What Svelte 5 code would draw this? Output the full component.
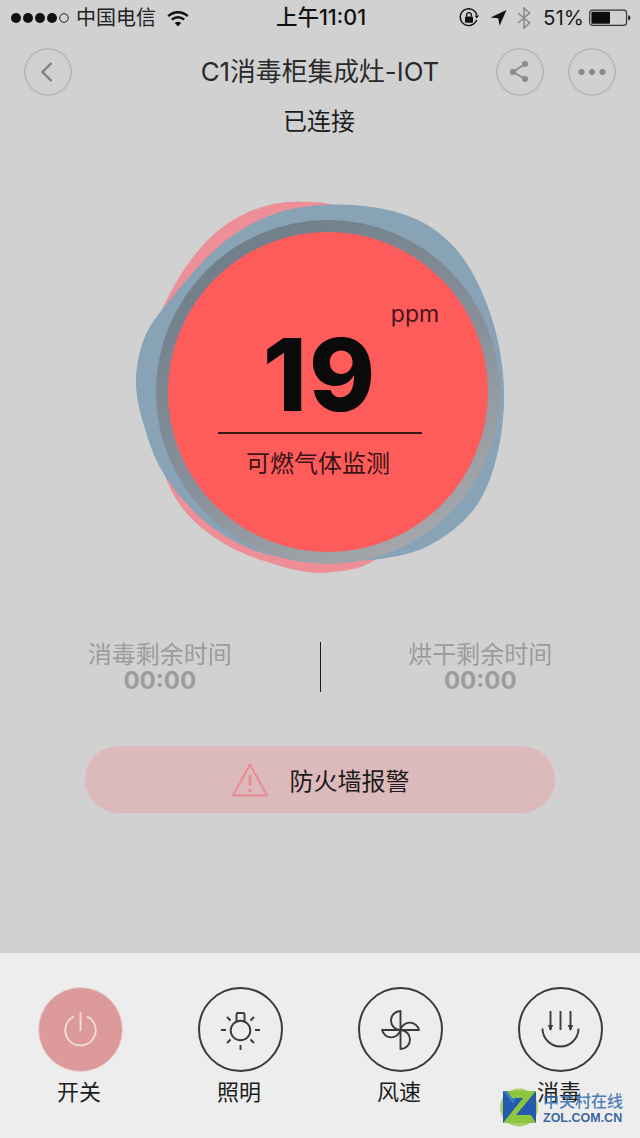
<script>
  function smooth(pts) {
    const n = pts.length;
    let d = `M${pts[0][0]} ${pts[0][1]}`;
    for (let i = 0; i < n; i++) {
      const p0 = pts[(i - 1 + n) % n], p1 = pts[i], p2 = pts[(i + 1) % n], p3 = pts[(i + 2) % n];
      const c1 = [p1[0] + (p2[0] - p0[0]) / 6, p1[1] + (p2[1] - p0[1]) / 6];
      const c2 = [p2[0] - (p3[0] - p1[0]) / 6, p2[1] - (p3[1] - p1[1]) / 6];
      d += `C${c1[0].toFixed(1)} ${c1[1].toFixed(1)} ${c2[0].toFixed(1)} ${c2[1].toFixed(1)} ${p2[0]} ${p2[1]}`;
    }
    return d + 'Z';
  }
  const zoomed = (a) => a.map(([x, y]) => [120 + x / 3, 190 + y / 3]);
  const pink = smooth(zoomed([
    [100,590],[110,410],[185,250],[285,130],[400,60],[530,35],[680,60],[850,200],[950,450],[950,800],[800,1080],[620,1148],[430,1112],[280,1040],[170,930],[115,780]
  ]));
  const blue = smooth(zoomed([
    [600,45],[780,55],[930,110],[1040,220],[1120,400],[1152,600],[1130,800],[1060,960],[920,1070],[750,1110],[560,1110],[400,1080],[250,990],[130,850],[70,700],[48,570],[75,440],[150,330],[290,175],[440,80]
  ]));
  const tabs = ['开关', '照明', '风速', '消毒'];
</script>

<div class="screen">
  <div class="status">
    <div class="st-left">
      <svg width="60" height="12" viewBox="0 0 60 12">
        <circle cx="5" cy="6" r="5" fill="#111"/><circle cx="17" cy="6" r="5" fill="#111"/><circle cx="29" cy="6" r="5" fill="#111"/><circle cx="41" cy="6" r="5" fill="#111"/><circle cx="53" cy="6" r="4.3" fill="none" stroke="#222" stroke-width="1"/>
      </svg>
      <span class="carrier">中国电信</span>
      <svg class="wifi" width="22" height="17" viewBox="0 0 22 17" fill="none" stroke="#111" stroke-width="2.4">
        <path d="M1.2 6.2C6.8 1 15.2 1 20.8 6.2"/><path d="M4.8 9.6C8.4 6.4 13.6 6.4 17.2 9.6"/><path d="M11 16.5L7.8 12.9C9.8 11.4 12.2 11.4 14.2 12.9Z" fill="#111" stroke="none"/>
      </svg>
    </div>
    <div class="time">上午11:01</div>
    <div class="st-right">
      <svg width="20" height="20" viewBox="0 0 20 20" fill="none">
        <path d="M17.6 12A8.4 8.4 0 1 1 17.8 7" stroke="#111" stroke-width="1.4"/><path d="M15.6 7.5h4.4L17.8 10.4Z" fill="#111"/>
        <rect x="6" y="8.6" width="8" height="6.2" rx="1" fill="#111"/><path d="M7.6 8.6V7a2.4 2.4 0 0 1 4.8 0v1.6" stroke="#111" stroke-width="1.3"/>
      </svg>
      <svg class="loc" width="17" height="16" viewBox="0 0 17 16"><path d="M16.5 0L0.5 7.4L8.2 8.2L9.6 15.8Z" fill="#111"/></svg>
      <svg class="bt" width="14" height="22" viewBox="0 0 14 22" fill="none" stroke="#8c8c8c" stroke-width="1.6"><path d="M1 6L12.5 15.8L7 21V1L12.5 6.2L1 16"/></svg>
      <span class="pct">51%</span>
      <svg width="42" height="18" viewBox="0 0 44 18">
        <rect x="0.7" y="0.7" width="38.6" height="16" rx="3" fill="none" stroke="#333" stroke-width="1.2"/>
        <rect x="2.5" y="2.5" width="19.5" height="12.5" rx="1" fill="#0c0c0c"/>
        <path d="M41 6c1.6.3 2.4 1.4 2.4 2.7S42.600 11.100 41 11.400Z" fill="#222"/>
      </svg>
    </div>
  </div>

  <header class="nav">
    <button class="round" aria-label="返回">
      <svg width="48" height="48" viewBox="0 0 48 48" fill="none"><circle cx="24" cy="24" r="23.200" stroke="#b6b6b6" stroke-width="1.500"/><path d="M27.500 15L18.500 24L27.500 33" stroke="#808080" stroke-width="2.400"/></svg>
    </button>
    <h1>C1消毒柜集成灶-IOT</h1>
    <div class="nav-right">
      <button class="round" aria-label="分享">
        <svg width="48" height="48" viewBox="0 0 48 48" fill="none"><circle cx="24" cy="24" r="23.200" stroke="#b6b6b6" stroke-width="1.500"/><path d="M29 16L17 24L29 31" stroke="#8a8a8a" stroke-width="1.800"/><circle cx="29" cy="16" r="3" fill="#8a8a8a"/><circle cx="17" cy="24" r="3" fill="#8a8a8a"/><circle cx="29" cy="31" r="3" fill="#8a8a8a"/></svg>
      </button>
      <button class="round" aria-label="更多">
        <svg width="48" height="48" viewBox="0 0 48 48" fill="none"><circle cx="24" cy="24" r="23.200" stroke="#b6b6b6" stroke-width="1.500"/><circle cx="13.500" cy="24" r="3" fill="#8a8a8a"/><circle cx="24" cy="24" r="3" fill="#8a8a8a"/><circle cx="34.500" cy="24" r="3" fill="#8a8a8a"/></svg>
      </button>
    </div>
  </header>

  <div class="conn">已连接</div>

  <section class="gauge">
    <svg class="blobs" width="640" height="420" viewBox="0 180 640 420">
      <defs>
        <linearGradient id="ring" x1="0.25" y1="0" x2="0.8" y2="0.95">
          <stop offset="0" stop-color="#6f7d88"/>
          <stop offset="0.55" stop-color="#87909a"/>
          <stop offset="1" stop-color="#a6a9ac"/>
        </linearGradient>
      </defs>
      <path d={pink} fill="#ee8e97"/>
      <path d={blue} fill="#88a2b6"/>
      <circle cx="328" cy="392" r="172" fill="url(#ring)"/>
      <circle cx="328" cy="392" r="160" fill="#fe5b5b"/>
    </svg>
    <div class="reading">
      <div class="value">19<span class="unit">ppm</span></div>
      <div class="rule"></div>
      <div class="caption">可燃气体监测</div>
    </div>
  </section>

  <section class="timers">
    <div class="timer"><div class="t-label">消毒剩余时间</div><div class="t-val">00:00</div></div>
    <div class="sep"></div>
    <div class="timer"><div class="t-label">烘干剩余时间</div><div class="t-val">00:00</div></div>
  </section>

  <div class="alert">
    <svg width="38" height="36" viewBox="0 0 38 36" fill="none">
      <path d="M19 2.500L36 33.500H2Z" stroke="#ea8a93" stroke-width="2" stroke-linejoin="round"/>
      <path d="M19 13V24" stroke="#ea8a93" stroke-width="2.600"/><circle cx="19" cy="28.500" r="1.700" fill="#ea8a93"/>
    </svg>
    <span>防火墙报警</span>
  </div>

  <nav class="panel">
    {#each tabs as t, i}
      <div class="tab">
        <svg class="ic" width="85" height="85" viewBox="0 0 85 85" fill="none" stroke="#3a3a3a" stroke-width="1.900">
          {#if i === 0}
            <circle cx="42.500" cy="42.500" r="42" fill="#dd9a9b" stroke="#eccfcd" stroke-width="1"/>
            <path d="M36 29.500A15.200 15.200 0 1 0 49 29.500" stroke="#f2dfda" stroke-width="1.800"/>
            <path d="M42.500 25V44" stroke="#f2dfda" stroke-width="1.800"/>
          {:else}
            <circle cx="42.500" cy="42.500" r="41.500" stroke-width="2"/>
          {/if}
          {#if i === 1}
            <circle cx="42.500" cy="43.500" r="9.800"/>
            <path d="M38.500 34.500V27.500a1.500 1.500 0 0 1 1.500-1.500h5a1.500 1.500 0 0 1 1.500 1.500V34.500"/>
            <path d="M23 43h5M57 43h5M42.500 58v5M29 30l3.500 3.500M56 30l-3.500 3.500M29 56l3.500-3.500M56 56l-3.500-3.500"/>
          {/if}
          {#if i === 2}
            <path d="M42.500 24A9.500 9.500 0 0 0 42.500 43ZM61 43A9.500 9.500 0 0 0 42.500 43ZM42.500 62A9.500 9.500 0 0 0 42.500 43ZM24 43A9.500 9.500 0 0 0 42.500 43Z" stroke-linejoin="round"/>
          {/if}
          {#if i === 3}
            <path d="M24.500 41.500A18 18 0 0 0 60.500 41.500"/>
            <path d="M32.500 24V43M42.500 24V43M52.500 24V43"/>
            <path d="M29.800 38L32.500 44L35.200 38ZM49.800 38L52.500 44L55.200 38Z" fill="#3a3a3a" stroke="none"/>
          {/if}
        </svg>
        <div class="tab-label">{t}</div>
      </div>
    {/each}
  </nav>

  <div class="mark">
    <svg width="40" height="40" viewBox="0 0 40 40">
      <circle cx="20" cy="19.500" r="19" fill="#a9cf6c"/>
      <path d="M4 3H37V35H4Z" fill="#2559ad"/>
      <path d="M4 3L20 3L14 16Z" fill="#3d7cc4"/>
      <path d="M8 3H37L17 27H32L37 35H4L24 10H13Z" fill="#8cc63f"/>
    </svg>
    <div class="mark-text">
      <div class="m1">中关村在线</div>
      <div class="m2">ZOL.COM.CN</div>
    </div>
  </div>
</div>

<style>
  :global(body) { margin: 0; background: #d1d1d1; }
  .screen {
    position: relative;
    width: 640px;
    height: 1138px;
    overflow: hidden;
    background: #d1d1d1;
    color: #1c1c1c;
    display: flex;
    flex-direction: column;
    font-family: Inter, "Noto Sans CJK SC", sans-serif;
  }
  .status {
    height: 36px;
    display: grid;
    grid-template-columns: 1fr auto 1fr;
    align-items: center;
    padding: 0 9px 0 11px;
    color: #111;
  }
  .st-left, .st-right { display: flex; align-items: center; }
  .st-right { justify-content: flex-end; }
  .carrier { font-size: 20px; margin-left: 5px; line-height: 1; color: #222; }
  .wifi { margin-left: 11px; }
  .time { font-size: 21.500px; font-weight: 500; line-height: 1; white-space: nowrap; }
  .loc { margin-left: 11px; }
  .bt { margin-left: 10px; }
  .pct { font-size: 20.500px; margin-left: 12px; margin-right: 5px; line-height: 1; color: #1c1c1c; }

  .nav {
    height: 48px;
    margin-top: 12px;
    padding: 0 24px;
    display: grid;
    grid-template-columns: 1fr auto 1fr;
    align-items: center;
  }
  .nav-right { display: flex; gap: 24px; justify-content: flex-end; }
  .round { width: 48px; height: 48px; padding: 0; border: 0; background: none; display: block; }
  .round svg { display: block; }
  h1 { margin: 0; font-size: 25.800px; font-weight: 400; line-height: 48px; color: #2a2a2a; white-space: nowrap; }
  .conn { margin-top: 8px; padding-right: 2px; text-align: center; font-size: 24px; line-height: 36px; color: #1c1c1c; }

  .gauge {
    position: relative;
    height: 460px;
    display: flex;
    flex-direction: column;
    align-items: center;
  }
  .blobs { position: absolute; left: 0; top: 40px; display: block; }
  .reading { position: relative; margin-top: 180px; width: 204px; display: flex; flex-direction: column; align-items: center; }
  .value {
    position: relative;
    font-size: 100px;
    font-weight: 800;
    line-height: 110px;
    color: #0a0a0a;
    margin-left: 0;
    letter-spacing: 2px;
  }
  .unit {
    position: absolute;
    left: 128px;
    top: -18px;
    font-size: 23px;
    font-weight: 400;
    line-height: 24px;
    letter-spacing: 0;
    color: #4a1518;
  }
  .rule { width: 204px; height: 1.500px; background: #3b1416; margin-top: 2px; }
  .caption { font-size: 24px; line-height: 36px; margin-top: 12px; margin-right: 4px; color: #3b1416; white-space: nowrap; }

  .timers { margin-top: 42px; height: 50px; display: grid; grid-template-columns: 1fr 1px 1fr; color: #9c9c9c; }
  .timer { display: flex; flex-direction: column; align-items: center; }
  .sep { background: #1c1c1c; height: 50px; }
  .t-label { font-size: 24px; line-height: 26px; white-space: nowrap; }
  .t-val { font-size: 24px; font-weight: 700; line-height: 26px; }

  .alert {
    margin: 54px 85px 0;
    height: 67px;
    border-radius: 34px;
    background: #dcb9bb;
    display: flex;
    align-items: center;
    justify-content: center;
    gap: 21px;
    font-size: 24px;
    color: #1c1c1c;
  }
  .panel {
    margin-top: auto;
    height: 185px;
    box-sizing: border-box;
    background: #ededed;
    padding-top: 34px;
    display: grid;
    grid-template-columns: repeat(4, 160px);
  }
  .tab { display: flex; flex-direction: column; align-items: center; }
  .ic { display: block; }
  .tab-label { margin-top: 4px; margin-right: 2px; font-size: 22px; line-height: 32px; color: #1c1c1c; }

  .mark {
    position: absolute;
    left: 499px;
    top: 1088px;
    display: flex;
    align-items: flex-start;
    gap: 4px;
  }
  .mark-text { margin-top: 4px; display: flex; flex-direction: column; align-items: flex-start; }
  .m1 { font-size: 16px; font-weight: 500; line-height: 19px; color: rgba(45, 105, 175, 0.85); white-space: nowrap; }
  .m2 { font-size: 12.500px; font-weight: 700; line-height: 14px; color: rgba(35, 85, 150, 0.9); white-space: nowrap; font-family: "Liberation Sans", sans-serif; }
</style>
